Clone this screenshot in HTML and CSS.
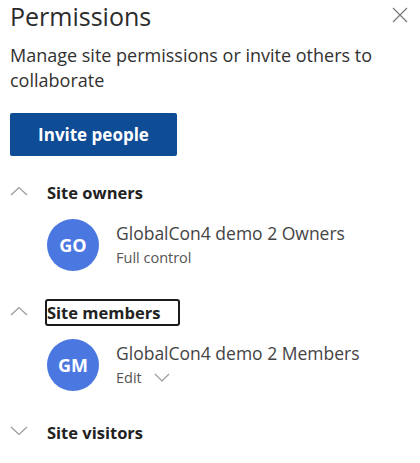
FILE: index.html
```html
<!DOCTYPE html>
<html lang="en">
<head>
    <meta charset="UTF-8">
    <meta name="viewport" content="width=device-width, initial-scale=1.0">
    <title>Permissions</title>
    <link rel="stylesheet" href="styles.css">
</head>
<body>
    <div class="panel">
        <div class="header">
            <h1>Permissions</h1>
            <button class="close" aria-label="Close">
                <svg width="16" height="16" viewBox="0 0 16 16"><path d="M1 1 L15 15 M15 1 L1 15" stroke="#777" stroke-width="1.2" fill="none"/></svg>
            </button>
        </div>
        <p class="desc">Manage site permissions or invite others to collaborate</p>
        <button class="invite">Invite people</button>

        <div class="group">
            <div class="group-head">
                <svg class="chev" width="18" height="10" viewBox="0 0 18 10"><path d="M1 9 L9 1.5 L17 9" stroke="#999" stroke-width="1.2" fill="none"/></svg>
                <span class="group-title">Site owners</span>
            </div>
            <div class="member">
                <div class="avatar">GO</div>
                <div class="info">
                    <div class="name">GlobalCon4 demo 2 Owners</div>
                    <div class="role">Full control</div>
                </div>
            </div>
        </div>

        <div class="group">
            <div class="group-head">
                <svg class="chev" width="18" height="10" viewBox="0 0 18 10"><path d="M1 9 L9 1.5 L17 9" stroke="#999" stroke-width="1.2" fill="none"/></svg>
                <span class="group-title focused">Site members</span>
            </div>
            <div class="member">
                <div class="avatar">GM</div>
                <div class="info">
                    <div class="name">GlobalCon4 demo 2 Members</div>
                    <div class="role">Edit
                        <svg class="drop" width="16" height="9" viewBox="0 0 16 9"><path d="M1 1 L8 8 L15 1" stroke="#999" stroke-width="1.2" fill="none"/></svg>
                    </div>
                </div>
            </div>
        </div>

        <div class="group">
            <div class="group-head">
                <svg class="chev" width="18" height="10" viewBox="0 0 18 10"><path d="M1 1 L9 8.5 L17 1" stroke="#999" stroke-width="1.2" fill="none"/></svg>
                <span class="group-title">Site visitors</span>
            </div>
        </div>
    </div>
</body>
</html>
```

FILE: styles.css
```css
body{
    margin: 0;
    background-color: #fff;
    font-family: "Open Sans", "Noto Sans", sans-serif;
    color: #323130;
}
.panel{
    padding: 0 10px;
}
.header{
    display: flex;
    justify-content: space-between;
    align-items: flex-start;
}
h1{
    margin: 0;
    font-size: 25px;
    font-weight: 400;
    line-height: 32px;
    color: #2b2b2b;
}
.close{
    background: none;
    border: none;
    padding: 0;
    margin: 7px 2px 0 0;
    cursor: pointer;
}
.desc{
    margin: 11px 0 0;
    font-size: 18px;
    line-height: 25px;
    color: #323130;
}
.invite{
    margin-top: 20px;
    width: 167px;
    height: 43px;
    background-color: #0f4c96;
    color: #fff;
    border: none;
    border-radius: 2px;
    font-family: inherit;
    font-size: 17px;
    font-weight: 700;
    cursor: pointer;
}
.group{
    margin-top: 27px;
}
.invite + .group{
    margin-top: 22px;
}
.group-head{
    display: flex;
    align-items: center;
    gap: 19px;
    height: 28px;
}
.chev{
    margin-top: -3px;
}
.group-title{
    font-size: 16.5px;
    font-weight: 700;
    color: #222;
    padding: 2px;
    margin-left: -2px;
}
.focused{
    border: 2px solid #1b1b1b;
    border-radius: 3px;
    padding: 0 18px 0 0;
}
.member{
    display: flex;
    align-items: center;
    gap: 17px;
    margin: 13px 0 0 37px;
}
.avatar{
    width: 52px;
    height: 52px;
    border-radius: 50%;
    background-color: #4a78e0;
    color: #fff;
    font-weight: 700;
    font-size: 18px;
    display: flex;
    align-items: center;
    justify-content: center;
}
.name{
    font-size: 17.5px;
    color: #444;
    line-height: 24px;
}
.role{
    font-size: 14.5px;
    color: #555;
    line-height: 24px;
    margin-top: 1px;
    display: flex;
    align-items: center;
    gap: 12px;
}
```
